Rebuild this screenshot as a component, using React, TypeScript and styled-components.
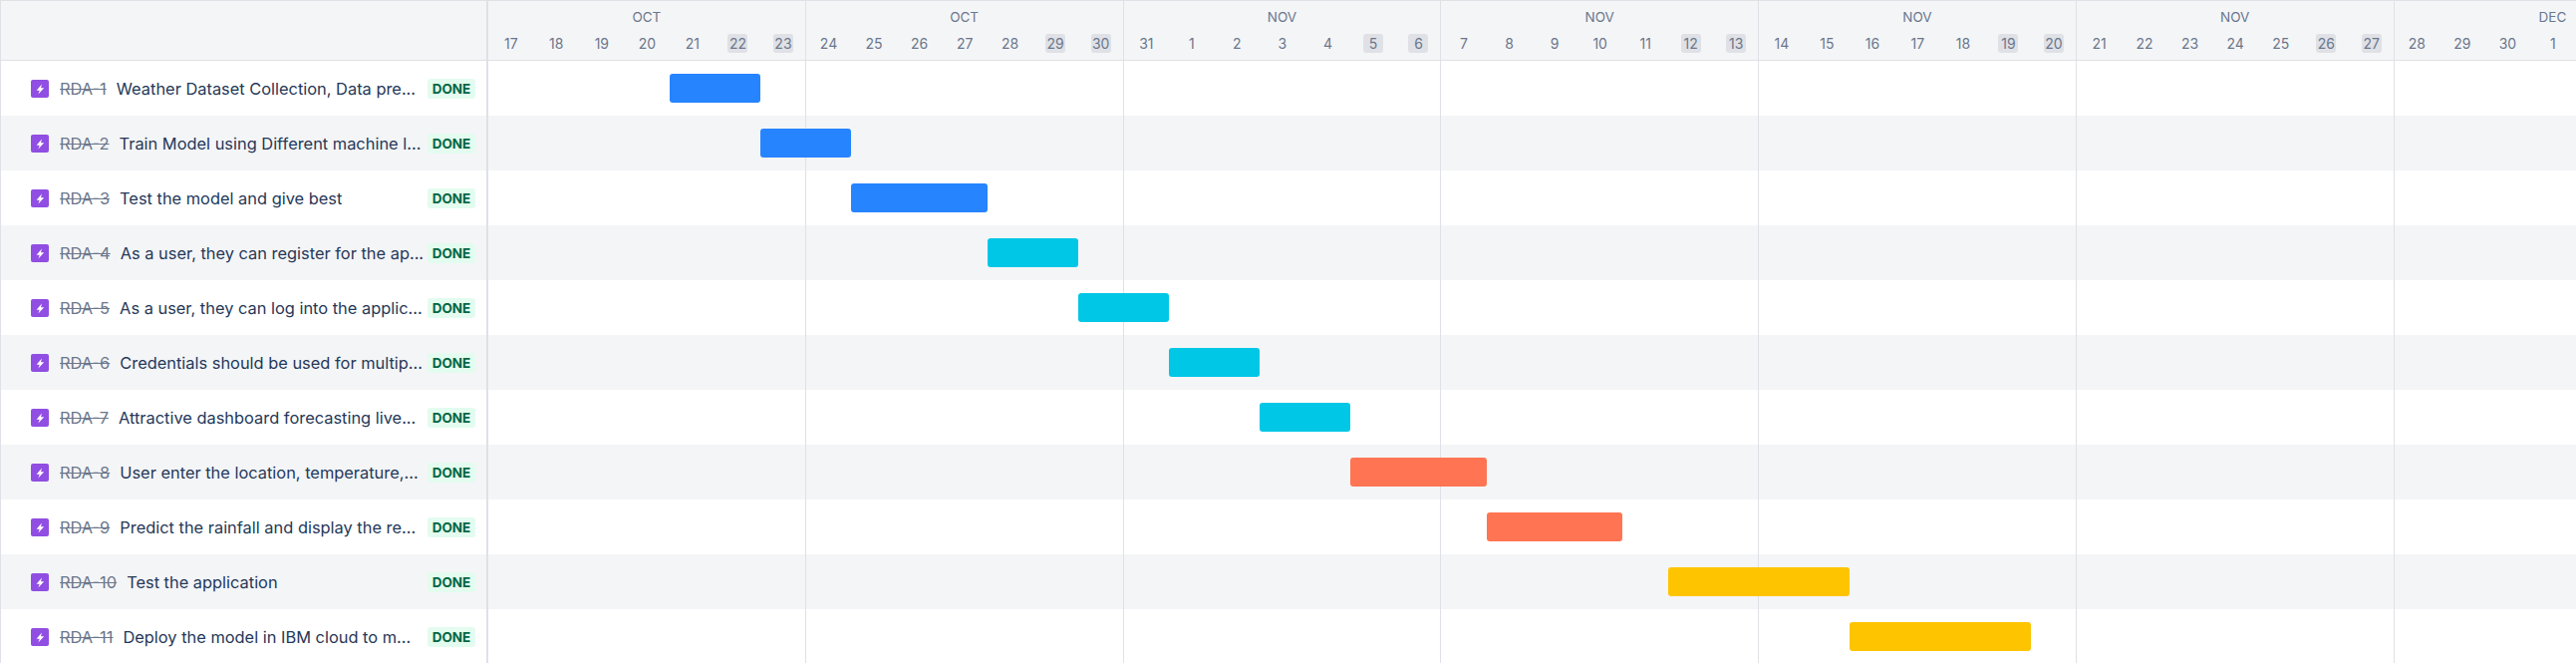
import React from 'react';
import styled, { createGlobalStyle } from 'styled-components';

const GlobalStyle = createGlobalStyle`
  html, body {
    margin: 0;
    padding: 0;
    background: #fff;
    overflow: hidden;
  }
  body {
    font-family: Inter, 'Noto Sans', sans-serif;
    color: #172b4d;
  }
`;

const DAY_WIDTH = 45.54;
const WEEK_WIDTH = DAY_WIDTH * 7;

const colors = {
  blue: '#2684ff',
  teal: '#00c7e6',
  coral: '#ff7452',
  yellow: '#ffc400',
};

type BarColor = keyof typeof colors;

interface Issue {
  id: string;
  title: string;
  start: number;
  days: number;
  color: BarColor;
}

const issues: Issue[] = [
  { id: 'RDA-1', title: 'Weather Dataset Collection, Data pre...', start: 4, days: 2, color: 'blue' },
  { id: 'RDA-2', title: 'Train Model using Different machine l...', start: 6, days: 2, color: 'blue' },
  { id: 'RDA-3', title: 'Test the model and give best', start: 8, days: 3, color: 'blue' },
  { id: 'RDA-4', title: 'As a user, they can register for the ap...', start: 11, days: 2, color: 'teal' },
  { id: 'RDA-5', title: 'As a user, they can log into the applic...', start: 13, days: 2, color: 'teal' },
  { id: 'RDA-6', title: 'Credentials should be used for multip...', start: 15, days: 2, color: 'teal' },
  { id: 'RDA-7', title: 'Attractive dashboard forecasting live...', start: 17, days: 2, color: 'teal' },
  { id: 'RDA-8', title: 'User enter the location, temperature,...', start: 19, days: 3, color: 'coral' },
  { id: 'RDA-9', title: 'Predict the rainfall and display the re...', start: 22, days: 3, color: 'coral' },
  { id: 'RDA-10', title: 'Test the application', start: 26, days: 4, color: 'yellow' },
  { id: 'RDA-11', title: 'Deploy the model in IBM cloud to m...', start: 30, days: 4, color: 'yellow' },
];

const weeks = [
  { month: 'OCT', days: [17, 18, 19, 20, 21, 22, 23] },
  { month: 'OCT', days: [24, 25, 26, 27, 28, 29, 30] },
  { month: 'NOV', days: [31, 1, 2, 3, 4, 5, 6] },
  { month: 'NOV', days: [7, 8, 9, 10, 11, 12, 13] },
  { month: 'NOV', days: [14, 15, 16, 17, 18, 19, 20] },
  { month: 'NOV', days: [21, 22, 23, 24, 25, 26, 27] },
  { month: 'DEC', days: [28, 29, 30, 1] },
];

const Page = styled.div`
  width: 2585px;
  height: 665px;
  overflow: hidden;
  background: #fff;
  border-top: 1px solid #dfe1e6;
  border-left: 1px solid #dfe1e6;
  box-sizing: border-box;
`;

const HeaderRow = styled.div`
  display: flex;
  height: 60px;
  box-sizing: border-box;
  background: #f4f5f7;
  border-bottom: 1px solid #dfe1e6;
`;

const HeaderSide = styled.div`
  flex: 0 0 489px;
  box-sizing: border-box;
  border-right: 2px solid #dfe1e6;
`;

const WeekList = styled.div`
  display: flex;
  flex: 0 0 auto;
`;

const Week = styled.div`
  flex: 0 0 ${WEEK_WIDTH}px;
  min-width: 0;
  box-sizing: border-box;
  border-right: 1px solid #dfe1e6;
  display: flex;
  flex-direction: column;
  align-items: center;
`;

const MonthLabel = styled.div`
  height: 33px;
  padding-top: 6px;
  box-sizing: border-box;
  font-size: 13.5px;
  line-height: 20px;
  color: #6b778c;
`;

const DayList = styled.div`
  display: flex;
  align-self: flex-start;
`;

const DayCell = styled.div`
  flex: 0 0 ${DAY_WIDTH}px;
  display: flex;
  justify-content: center;
`;

const DayLabel = styled.span<{ $weekend: boolean }>`
  width: 20px;
  height: 19px;
  border-radius: 3px;
  background: ${(p) => (p.$weekend ? '#dfe1e6' : 'transparent')};
  font-size: 14px;
  line-height: 19px;
  text-align: center;
  color: #6b778c;
`;

const Row = styled.div<{ $striped: boolean }>`
  display: flex;
  height: 55px;
  background: ${(p) => (p.$striped ? '#f4f5f7' : '#fff')};
`;

const IssueCell = styled.div`
  flex: 0 0 489px;
  box-sizing: border-box;
  display: flex;
  align-items: center;
  padding: 0 11px 0 30px;
  border-right: 2px solid #dfe1e6;
`;

const EpicIcon = styled.svg`
  flex: 0 0 18px;
  width: 18px;
  height: 18px;
  margin-right: 11px;
`;

const IssueKey = styled.span`
  flex: 0 0 auto;
  font-size: 16.4px;
  color: #6b778c;
  text-decoration: line-through;
  margin-right: 10px;
`;

const IssueTitle = styled.span`
  flex: 1 1 0;
  min-width: 0;
  font-size: 16.4px;
  color: #253858;
  white-space: nowrap;
  overflow: hidden;
`;

const StatusBadge = styled.span`
  flex: 0 0 auto;
  width: 48px;
  height: 20px;
  border-radius: 3px;
  background: #e3fcef;
  color: #006644;
  font-size: 13.5px;
  font-weight: 700;
  line-height: 20px;
  text-align: center;
`;

const Track = styled.div`
  flex: 1 1 auto;
  display: flex;
  align-items: center;
  background-image: repeating-linear-gradient(
    to right,
    transparent 0,
    transparent ${WEEK_WIDTH - 1}px,
    #dfe1e6 ${WEEK_WIDTH - 1}px,
    #dfe1e6 ${WEEK_WIDTH}px
  );
`;

const Bar = styled.div<{ $start: number; $days: number; $color: BarColor }>`
  margin-left: ${(p) => p.$start * DAY_WIDTH}px;
  width: ${(p) => p.$days * DAY_WIDTH}px;
  height: 29px;
  border-radius: 3px;
  background: ${(p) => colors[p.$color]};
`;

const BoltIcon = () => (
  <EpicIcon viewBox="0 0 18 18">
    <rect width="18" height="18" rx="2" fill="#904ee2" />
    <path d="M11 4.4 5.6 10.7h3.1L7.4 14.6l5.8-6.3H10z" fill="#fff" />
  </EpicIcon>
);

export default function App() {
  return (
    <Page>
      <GlobalStyle />
      <HeaderRow>
        <HeaderSide />
        <WeekList>
          {weeks.map((week) => (
            <Week key={`${week.month}-${week.days[0]}`}>
              <MonthLabel>{week.month}</MonthLabel>
              <DayList>
                {week.days.map((day, i) => (
                  <DayCell key={day}>
                    <DayLabel $weekend={i >= 5}>{day}</DayLabel>
                  </DayCell>
                ))}
              </DayList>
            </Week>
          ))}
        </WeekList>
      </HeaderRow>
      {issues.map((issue, i) => (
        <Row key={issue.id} $striped={i % 2 === 1}>
          <IssueCell>
            <BoltIcon />
            <IssueKey>{issue.id}</IssueKey>
            <IssueTitle>{issue.title}</IssueTitle>
            <StatusBadge>DONE</StatusBadge>
          </IssueCell>
          <Track>
            <Bar $start={issue.start} $days={issue.days} $color={issue.color} />
          </Track>
        </Row>
      ))}
    </Page>
  );
}
